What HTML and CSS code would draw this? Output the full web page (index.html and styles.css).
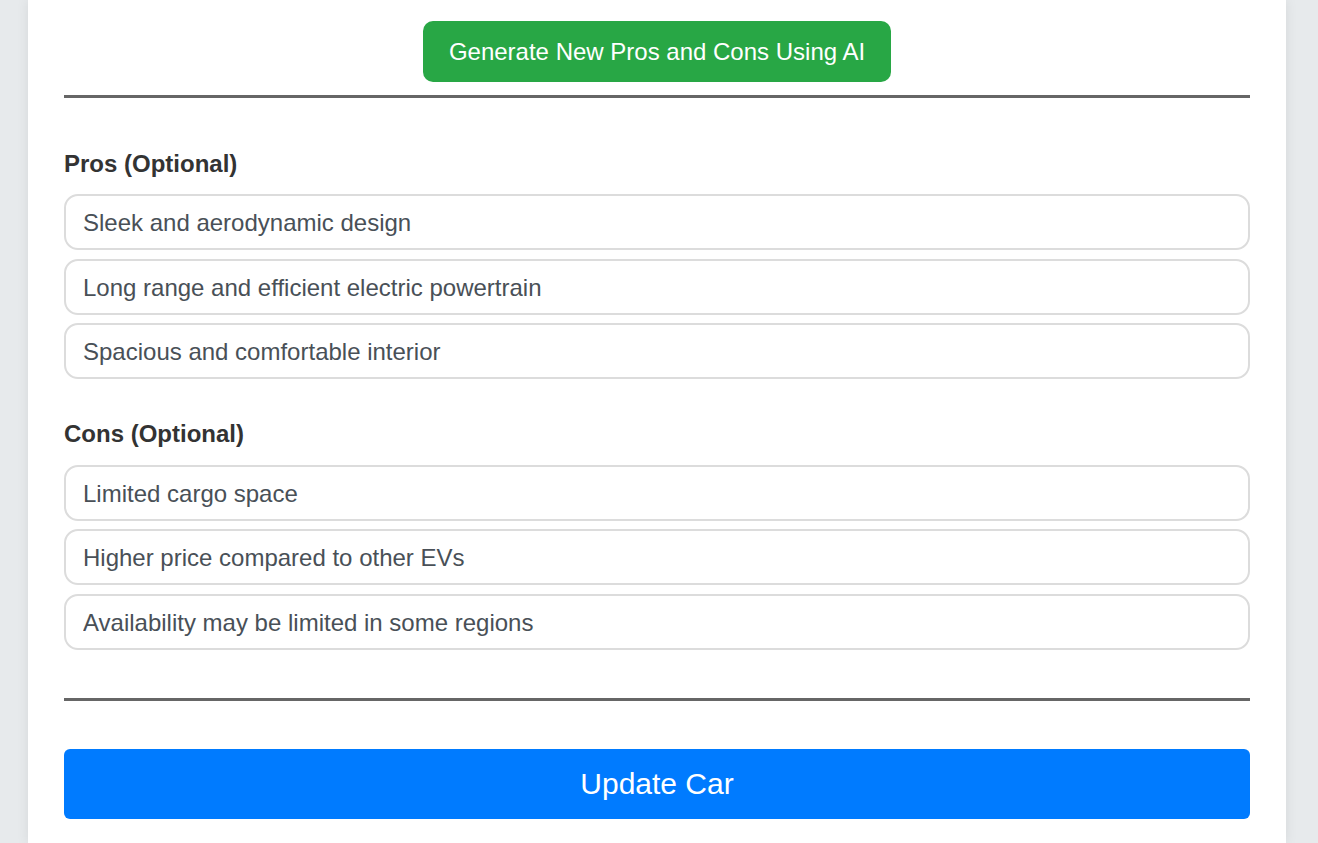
FILE: index.html
```html
<!DOCTYPE html>
<html lang="en">
<head>
<meta charset="utf-8">
<title>Edit Car</title>
<link rel="stylesheet" href="styles.css">
</head>
<body>
<main class="card">
  <div class="gen-wrap">
    <button class="btn-generate" type="button">Generate New Pros and Cons Using AI</button>
  </div>
  <hr class="divider">
  <section class="group group-pros">
    <label class="group-label">Pros (Optional)</label>
    <input class="field" type="text" value="Sleek and aerodynamic design">
    <input class="field" type="text" value="Long range and efficient electric powertrain">
    <input class="field" type="text" value="Spacious and comfortable interior">
  </section>
  <section class="group group-cons">
    <label class="group-label">Cons (Optional)</label>
    <input class="field" type="text" value="Limited cargo space">
    <input class="field" type="text" value="Higher price compared to other EVs">
    <input class="field" type="text" value="Availability may be limited in some regions">
  </section>
  <hr class="divider divider-bottom">
  <button class="btn-submit" type="submit">Update Car</button>
</main>
</body>
</html>
```

FILE: styles.css
```css
html, body {
  margin: 0;
  padding: 0;
}
body {
  background: #e7eaec;
  font-family: "Liberation Sans", Arial, sans-serif;
  overflow: hidden;
}
.card {
  box-sizing: border-box;
  width: 1258px;
  margin-left: 28px;
  background: #ffffff;
  padding: 21px 36px 24px;
  box-shadow: 0 0 12px rgba(0, 0, 0, 0.08);
}
.gen-wrap {
  display: flex;
  justify-content: center;
}
.btn-generate {
  height: 61px;
  padding: 0 26px;
  border: none;
  border-radius: 10px;
  background: #28a745;
  color: #ffffff;
  font-family: "Liberation Sans", Arial, sans-serif;
  font-size: 24px;
  line-height: 28px;
  cursor: pointer;
}
.divider {
  border: none;
  height: 3px;
  background: #666666;
  margin: 13px 0 0;
}
.group {
  display: flex;
  flex-direction: column;
}
.group-pros {
  margin-top: 52px;
}
.group-cons {
  margin-top: 32px;
}
.group-label {
  display: block;
  font-size: 24px;
  line-height: 28px;
  font-weight: bold;
  color: #333333;
  margin-bottom: 16px;
}
.group-cons .group-label {
  margin-bottom: 17px;
}
.field {
  box-sizing: border-box;
  width: 100%;
  height: 56px;
  margin: 0 0 8.5px;
  padding: 13px 17px 11px;
  border: 2px solid #dcdcdc;
  border-radius: 14px;
  background: #ffffff;
  color: #495057;
  font-family: "Liberation Sans", Arial, sans-serif;
  font-size: 24px;
  line-height: 28px;
  outline: none;
}
.divider-bottom {
  margin-top: 39.5px;
}
.btn-submit {
  display: block;
  width: 100%;
  height: 70px;
  margin-top: 48px;
  border: none;
  border-radius: 6px;
  background: #007bff;
  color: #ffffff;
  font-family: "Liberation Sans", Arial, sans-serif;
  font-size: 30px;
  cursor: pointer;
}
```
